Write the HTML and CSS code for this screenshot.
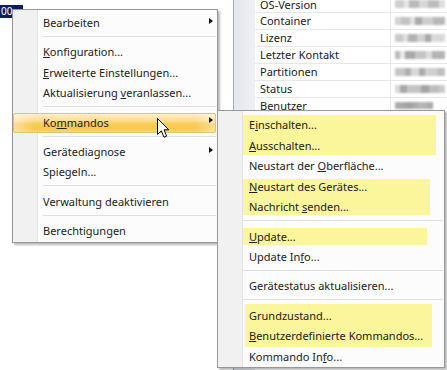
FILE: index.html
```html
<!DOCTYPE html>
<html>
<head>
<meta charset="utf-8">
<link rel="stylesheet" href="styles.css">
</head>
<body>
<div class="desk">
  <div class="left-pane"><span class="sel"><span class="sel-text">00</span></span></div>
  <div class="grid-pane">
    <div class="band"></div>
    <div class="props">
      <div class="row"><span class="lbl">OS-Version</span><span class="val"><i class="blur v1"></i></span></div>
      <div class="row"><span class="lbl">Container</span><span class="val"><i class="blur v2"></i></span></div>
      <div class="row"><span class="lbl">Lizenz</span><span class="val"><i class="blur v3"></i></span></div>
      <div class="row"><span class="lbl">Letzter Kontakt</span><span class="val"><i class="blur v4"></i></span></div>
      <div class="row"><span class="lbl">Partitionen</span><span class="val"><i class="blur v5"></i></span></div>
      <div class="row"><span class="lbl">Status</span><span class="val"><i class="blur v6"></i></span></div>
      <div class="row"><span class="lbl">Benutzer</span><span class="val"><i class="blur v7"></i></span></div>
    </div>
  </div>
</div>

<div class="menu main">
  <div class="item">Bearbeiten<span class="arrow"></span></div>
  <div class="sep"></div>
  <div class="item"><u>K</u>onfiguration...</div>
  <div class="item"><u>E</u>rweiterte Einstellungen...</div>
  <div class="item">Aktualisierung <u>v</u>eranlassen...</div>
  <div class="sep"></div>
  <div class="item hot">Ko<u>m</u>mandos<span class="arrow"></span></div>
  <div class="sep"></div>
  <div class="item">Gerätediagnose<span class="arrow"></span></div>
  <div class="item">Spiegeln...</div>
  <div class="sep"></div>
  <div class="item">Verwaltung deaktivieren</div>
  <div class="sep"></div>
  <div class="item">Berechtigungen</div>
</div>

<div class="menu sub">
  <div class="mark m1">
    <div class="item">E<u>i</u>nschalten...</div>
    <div class="item"><u>A</u>usschalten...</div>
  </div>
  <div class="item">Neustart der <u>O</u>berfläche...</div>
  <div class="mark m2">
    <div class="item"><u>N</u>eustart des Gerätes...</div>
    <div class="item">Nachricht <u>s</u>enden...</div>
  </div>
  <div class="sep"></div>
  <div class="mark m3">
    <div class="item"><u>U</u>pdate...</div>
  </div>
  <div class="item">Update In<u>f</u>o...</div>
  <div class="sep"></div>
  <div class="item">Gerätestatus aktualisieren...</div>
  <div class="sep"></div>
  <div class="mark m4">
    <div class="item">Grundzustand...</div>
    <div class="item"><u>B</u>enutzerdefinierte Kommandos...</div>
  </div>
  <div class="item">Kommando In<u>f</u>o...</div>
</div>

<svg class="cursor" width="13" height="21" viewBox="0 0 13 21">
  <path d="M0.5 0.5 L0.5 16.5 L4.3 12.8 L7 19.2 L9.6 18.1 L7 11.8 L11.8 11.8 Z" fill="#fff" stroke="#000" stroke-width="1" stroke-linejoin="miter"/>
</svg>
</body>
</html>
```
FILE: styles.css
```css
html, body {
  margin: 0;
  padding: 0;
}
body {
  width: 447px;
  height: 370px;
  overflow: hidden;
  position: relative;
  background: #fff;
  font-family: "Noto Sans", "Open Sans", sans-serif;
  font-size: 11px;
  color: #1e1e1e;
}

/* background window */
.desk {
  display: flex;
  height: 370px;
}
.left-pane {
  width: 233px;
  flex: none;
  padding-top: 5px;
}
.sel {
  display: block;
  width: 23px;
  height: 13px;
  background: #0c1f5c;
}
.sel-text {
  display: block;
  color: #fff;
  font-size: 10px;
  line-height: 13px;
  padding-left: 1px;
  white-space: nowrap;
}
.grid-pane {
  flex: 1;
  display: flex;
  border-left: 1px solid #a6adb8;
}
.band {
  width: 21px;
  flex: none;
  background: linear-gradient(to right, #e3e7ee, #eef0f5);
}
.props {
  flex: 1;
  margin-top: -4px;
}
.row {
  display: flex;
  height: 16px;
  border-bottom: 1px solid #e7e7e7;
}
.lbl {
  box-sizing: border-box;
  width: 136px;
  padding-left: 5px;
  line-height: 16px;
  border-right: 1px solid #e7e7e7;
  white-space: nowrap;
  color: #1a1a1a;
}
.row:first-child .lbl {
  line-height: 18px;
}
.val {
  flex: 1;
  padding: 4px 0 0 4px;
}
.blur {
  display: block;
  height: 8px;
  filter: blur(1.1px);
}
.v1 { width: 50px; background: linear-gradient(90deg, #cfcfcf 0 9px, #e6e6e6 9px 14px, #b9b9b9 14px 24px, #d6d6d6 24px 33px, #bdbdbd 33px 44px, #dedede 44px); }
.v2 { width: 50px; background: linear-gradient(90deg, #d3d3d3 0 6px, #c2c2c2 6px 15px, #e2e2e2 15px 20px, #a9a9a9 20px 27px, #cdcdcd 27px 38px, #b8b8b8 38px); }
.v3 { width: 50px; background: linear-gradient(90deg, #c9c9c9 0 8px, #dedede 8px 13px, #b1b1b1 13px 22px, #d2d2d2 22px 30px, #a7a7a7 30px 36px, #d9d9d9 36px); }
.v4 { width: 50px; background: linear-gradient(90deg, #bcbcbc 0 5px, #e8e8e8 5px 10px, #a9a9a9 10px 20px, #c4c4c4 20px 31px, #dcdcdc 31px 37px, #b4b4b4 37px); }
.v5 { width: 50px; background: linear-gradient(90deg, #c6c6c6 0 10px, #b0b0b0 10px 16px, #d8d8d8 16px 24px, #aaaaaa 24px 30px, #cfcfcf 30px 42px, #bfbfbf 42px); }
.v6 { width: 50px; background: linear-gradient(90deg, #dadada 0 5px, #a8a8a8 5px 12px, #c4c4c4 12px 26px, #a4a4a4 26px 34px, #bdbdbd 34px 44px, #cbcbcb 44px); }
.v7 { width: 38px; height: 7px; background: linear-gradient(90deg, #b0b0b0, #a2a2a2 40%, #b8b8b8 70%, #a6a6a6); }

/* menus */
.menu {
  position: absolute;
  border: 1px solid #979797;
  box-shadow: 2px 2px 2px rgba(0, 0, 0, 0.28);
  background:
    linear-gradient(90deg, #f1f1f2 0, #f1f1f2 24px, #e2e3e3 24px, #e2e3e3 25px, #fff 25px, #fff 26px, #fcfcfc 26px);
}
.menu.main {
  left: 12px;
  top: 9px;
  width: 203px;
  padding: 3px 1px 1px 0;
}
.menu.sub {
  left: 217px;
  top: 110px;
  width: 225px;
  padding: 4px 1px 0 0;
}
.item {
  position: relative;
  height: 20.6px;
  line-height: 20.6px;
  padding-left: 30px;
  white-space: nowrap;
  color: #222;
}
.sub .item {
  padding-left: 31px;
}
.item u {
  text-decoration-thickness: 1px;
  text-underline-offset: 1px;
}
.sep {
  position: relative;
  height: 8.6px;
}
.sep::after {
  content: "";
  position: absolute;
  left: 30px;
  right: 0;
  top: 2.5px;
  border-top: 1px solid #e0e0e0;
}
.sub .sep::after {
  left: 25px;
}
.arrow {
  position: absolute;
  right: 3px;
  top: 50%;
  margin-top: -5.5px;
  width: 0;
  height: 0;
  border-left: 4px solid #111;
  border-top: 3.5px solid transparent;
  border-bottom: 3.5px solid transparent;
}
.item.hot {
  box-sizing: border-box;
  border: 1px solid #e6c26a;
  border-radius: 2px;
  line-height: 18.6px;
  padding-left: 29px;
  background:
    linear-gradient(90deg, rgba(255, 255, 255, 0.4), rgba(255, 255, 255, 0) 10%, rgba(255, 255, 255, 0) 90%, rgba(255, 255, 255, 0.4)),
    linear-gradient(to bottom, #fdf0c0 0%, #fbe096 35%, #f8cc58 55%, #f7c94f 80%, #f9d56f 100%);
}
.item.hot .arrow {
  right: 2px;
}

/* yellow annotation marks */
.mark {
  position: relative;
}
.mark::before {
  content: "";
  position: absolute;
  left: 25px;
  background: #fbf59b;
}
.mark .item {
  position: relative;
}
.m1::before { top: 0; bottom: 1px; width: 193px; }
.m2::before { top: 2.5px; bottom: 3px; width: 187px; }
.m3::before { top: 1.7px; bottom: 2.2px; width: 184px; }
.m4::before { top: -1.6px; bottom: 0; left: 27px; width: 187px; }

.cursor {
  position: absolute;
  left: 157px;
  top: 118px;
}
```
